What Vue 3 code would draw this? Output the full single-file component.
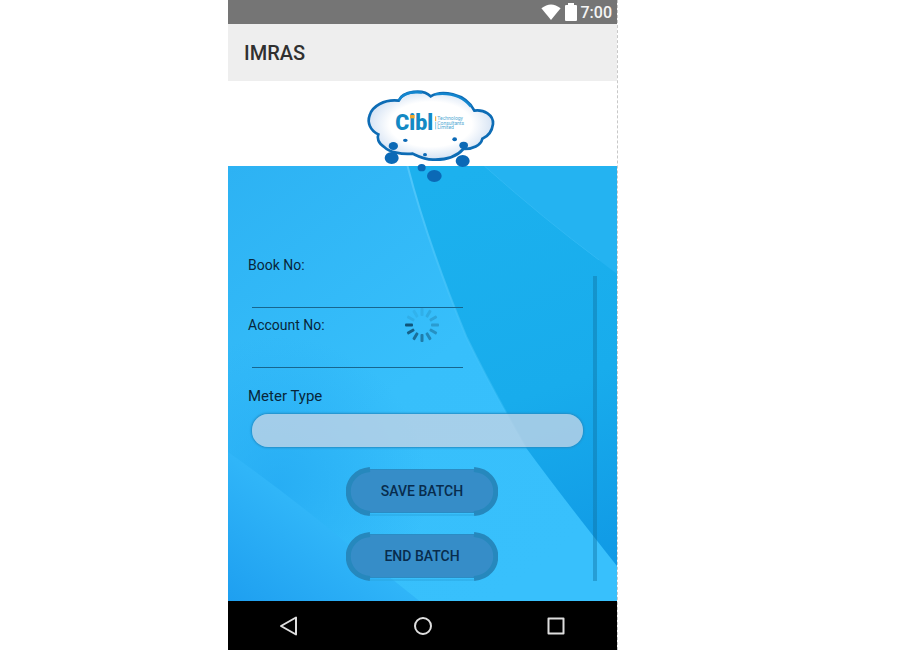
<script setup>
import { ref } from 'vue'

const bookNo = ref('')
const accountNo = ref('')
const meterType = ref('')

const spokes = [0.1, 0.14, 0.2, 0.26, 0.34, 0.42, 0.5, 0.6, 0.7, 0.8, 0.1, 0.08].map((opacity, i) => ({
  opacity,
  turn: `rotate(${i * 30})`,
}))
</script>

<template>
  <div class="page">
    <main class="phone">
      <div class="status">
        <svg class="wifi" viewBox="0 0 20 16" aria-hidden="true"><path d="M.4 4.2Q10-3.4 19.600 4.200L10 16Z" /></svg>
        <svg class="battery" viewBox="0 0 12 18" aria-hidden="true"><path d="M3 0H9V2H11Q12 2 12 3V17Q12 18 11 18H1Q0 18 0 17V3Q0 2 1 2H3Z" /></svg>
        <span>7:00</span>
      </div>
      <header class="appbar"><h1>IMRAS</h1></header>
      <div class="brand">
        <svg class="logo" viewBox="0 3 450 327" role="img" aria-label="Cibl">
          <defs>
            <radialGradient id="cloud" cx=".5" cy=".48" r=".55">
              <stop offset=".6" stop-color="#fff" />
              <stop offset="1" stop-color="#cbdcf1" />
            </radialGradient>
          </defs>
          <path
            d="M131 62C143 32 205 26 227 49C257 30 331 37 358 92C387 88 416 105 414 132C411 155 399 169 382 176C378 196 352 208 325 207C304 231 272 240 236 239C210 240 190 229 173 221C139 224 102 216 89 202C68 190 66 173 70 163C45 151 36 127 44 106C51 79 88 57 131 62Z"
            fill="url(#cloud)"
            stroke="#0d6cb5"
            stroke-width="8"
          />
          <path d="M131 61Q150 31 201 38M240 43Q310 34 348 80" fill="none" stroke="#1386cf" stroke-width="7" />
          <g fill="#0b69b6">
            <ellipse cx="115" cy="198" rx="14" ry="12" />
            <ellipse cx="110" cy="234" rx="21" ry="18" />
            <ellipse cx="151" cy="181" rx="7" ry="5" />
            <ellipse cx="210" cy="224" rx="6" ry="5" />
            <ellipse cx="299" cy="178" rx="7" ry="6" />
            <ellipse cx="326" cy="196" rx="13" ry="11" />
            <ellipse cx="323" cy="243" rx="21" ry="18" />
            <ellipse cx="200" cy="263" rx="12" ry="11" />
            <ellipse cx="238" cy="288" rx="22" ry="18" />
          </g>
          <text class="mark" x="121" y="150">Cibl</text>
          <rect x="165" y="105" width="14" height="10" fill="#f2a72e" />
          <path d="M242 109V123" stroke="#f2a72e" stroke-width="3" />
          <path d="M242 125V148" stroke="#58b8df" stroke-width="2" />
          <g class="tag">
            <text x="247" y="120">Technology</text>
            <text x="247" y="134">Consultants</text>
            <text x="247" y="148">Limited</text>
          </g>
        </svg>
      </div>
      <section class="content">
        <svg class="wallpaper" viewBox="0 0 390 435" preserveAspectRatio="none" aria-hidden="true">
          <defs>
            <linearGradient id="light" x1="0" y1="0" x2=".7" y2="1">
              <stop offset="0" stop-color="#2db2f3" />
              <stop offset=".55" stop-color="#37bffb" />
              <stop offset="1" stop-color="#38c0fc" />
            </linearGradient>
            <linearGradient id="deep" gradientUnits="userSpaceOnUse" x1="250" y1="0" x2="390" y2="400">
              <stop offset="0" stop-color="#1cb1ee" />
              <stop offset=".55" stop-color="#18acec" />
              <stop offset="1" stop-color="#1099e5" />
            </linearGradient>
            <linearGradient id="corner" gradientUnits="userSpaceOnUse" x1="0" y1="435" x2="85" y2="320">
              <stop offset="0" stop-color="#1e9ff0" />
              <stop offset="1" stop-color="#34bafa" />
            </linearGradient>
            <radialGradient id="shade" gradientUnits="userSpaceOnUse" cx="50" cy="320" r="150">
              <stop offset="0" stop-color="#22a8f2" stop-opacity=".75" />
              <stop offset="1" stop-color="#22a8f2" stop-opacity="0" />
            </radialGradient>
            <linearGradient id="edge" x1="0" y1="0" x2="0" y2="1">
              <stop offset="0" stop-color="#50c6fa" />
              <stop offset="1" stop-color="#3bc2fa" stop-opacity=".3" />
            </linearGradient>
          </defs>
          <rect width="390" height="435" fill="url(#light)" />
          <rect width="390" height="435" fill="url(#shade)" />
          <path d="M180 0Q200 77 239 171Q263 220 299 282Q335 331 390 400V0Z" fill="url(#deep)" />
          <path d="M257 0Q318 54 390 108V0Z" fill="#24b3f1" />
          <path d="M257 0Q318 54 372 94" fill="none" stroke="#30b9f3" />
          <path d="M180 0Q200 77 239 171Q263 220 299 282" fill="none" stroke="url(#edge)" stroke-width="2" />
          <path d="M0 286Q62 330 119 377L192 435H0Z" fill="url(#corner)" />
        </svg>
        <form class="form" @submit.prevent>
          <label for="book">Book No:</label>
          <input id="book" v-model="bookNo" type="text" />
          <label for="account" class="second">Account No:</label>
          <input id="account" v-model="accountNo" type="text" />
          <label for="meter" class="third">Meter Type</label>
          <select id="meter" v-model="meterType"><option value=""></option></select>
          <div class="actions">
            <button v-for="name in ['SAVE BATCH', 'END BATCH']" :key="name" type="button">
              <svg viewBox="0 0 152 49" aria-hidden="true">
                <rect x="3" y="2" width="146" height="44" rx="22" fill="#368dc8" />
                <path d="M24 2.500H128M24 45.500H128" stroke="#2a8cc4" />
                <path d="M24 48H128" stroke="#2ba6e0" />
                <path d="M24 2.500C-5 5-5 44 24 46.500M128 2.500C157 5 157 44 128 46.500" fill="none" stroke="#2688bd" stroke-width="5" />
              </svg>
              <span>{{ name }}</span>
            </button>
          </div>
        </form>
        <div class="track"></div>
        <svg class="spinner" viewBox="-18 -18 36 36" role="img" aria-label="Loading">
          <rect v-for="s in spokes" :key="s.turn" x="-1.500" y="-17" width="3" height="8" rx="1" :transform="s.turn" :opacity="s.opacity" />
        </svg>
      </section>
      <nav class="nav">
        <button type="button" aria-label="Back"><svg viewBox="0 0 20 20"><path d="M17 1.500V18.500L2 10Z" /></svg></button>
        <button type="button" aria-label="Home"><svg viewBox="0 0 20 20"><circle cx="10" cy="10" r="8" /></svg></button>
        <button type="button" aria-label="Recents"><svg viewBox="0 0 20 20"><rect x="2.500" y="2.500" width="15" height="15" /></svg></button>
      </nav>
    </main>
  </div>
</template>

<style>
body {
  margin: 0;
  background: #fff;
}
</style>

<style scoped>
.page {
  display: grid;
  grid-template-columns: 228fr 390fr 282fr;
  min-height: 100vh;
  font-family: Roboto, "Liberation Sans", sans-serif;
  font-size: 14px;
  color: #08263a;
}
.phone {
  grid-column: 2;
  display: flex;
  flex-direction: column;
  border-right: 1px dashed #c8c8c8;
  background-clip: padding-box;
}
.status {
  display: flex;
  align-items: center;
  justify-content: flex-end;
  gap: 4px;
  height: 24px;
  padding-right: 5px;
  background: #757575;
  color: #f4f4f4;
  font-size: 16px;
  font-weight: 500;
}
.status svg {
  fill: #fff;
}
.wifi {
  width: 20px;
  height: 16px;
}
.battery {
  width: 12px;
  height: 18px;
}
.appbar {
  display: flex;
  align-items: center;
  height: 57px;
  padding-left: 16px;
  background: #eee;
}
h1 {
  margin: 0;
  font-size: 20px;
  font-weight: 500;
  color: #303030;
}
.brand {
  display: flex;
  justify-content: center;
  height: 85px;
  padding-left: 15px;
  background: #fff;
}
.logo {
  position: relative;
  z-index: 1;
  flex: none;
  width: 150px;
  height: 109px;
}
.mark {
  font-size: 64px;
  font-weight: 900;
  fill: #1389c4;
}
.tag {
  font-size: 15px;
  fill: #4fa9d3;
}
.content {
  position: relative;
  display: flex;
  flex: 1;
  align-items: stretch;
  gap: 10px;
  padding: 89px 20px 20px;
}
.wallpaper {
  position: absolute;
  inset: 0;
  width: 100%;
  height: 100%;
}
.form {
  position: relative;
  display: flex;
  flex: 1;
  flex-direction: column;
  min-width: 0;
}
label {
  line-height: 20px;
}
.second {
  margin-top: 7px;
}
.third {
  margin-top: 18px;
  font-size: 15px;
}
input {
  box-sizing: border-box;
  width: 63%;
  height: 33px;
  margin: 0 0 0 4px;
  padding: 0 4px;
  border: 0;
  border-bottom: 1px solid #17668f;
  background: none;
  font: inherit;
  color: inherit;
}
select {
  height: 33px;
  margin: 8px 0 0 4px;
  padding: 0 16px;
  border: 0;
  border-radius: 16px;
  appearance: none;
  background: rgba(192, 211, 230, 0.8);
  box-shadow: 0 0 2px 1px #238ec7;
  font: inherit;
  color: inherit;
}
.actions {
  display: flex;
  flex-direction: column;
  align-items: center;
  gap: 16px;
  padding: 20px 0 0 13px;
}
.actions button {
  position: relative;
  width: 152px;
  height: 49px;
  padding: 0;
  border: 0;
  background: none;
  font: inherit;
  font-weight: 500;
  line-height: 47px;
  color: #082c4d;
}
.actions svg {
  position: absolute;
  inset: 0;
}
.actions span {
  position: relative;
}
.track {
  position: relative;
  width: 4px;
  margin-top: 21px;
  background: rgba(14, 111, 160, 0.42);
}
.spinner {
  position: absolute;
  top: 141px;
  left: 50%;
  width: 36px;
  height: 36px;
  margin-left: -19px;
  fill: #083a58;
}
.nav {
  display: flex;
  align-items: center;
  justify-content: space-between;
  height: 49px;
  padding: 0 51px;
  background: #000;
}
.nav button {
  display: flex;
  padding: 0;
  border: 0;
  background: none;
}
.nav svg {
  width: 20px;
  height: 20px;
  fill: none;
  stroke: #dedede;
  stroke-width: 2;
  stroke-linejoin: round;
}
</style>
